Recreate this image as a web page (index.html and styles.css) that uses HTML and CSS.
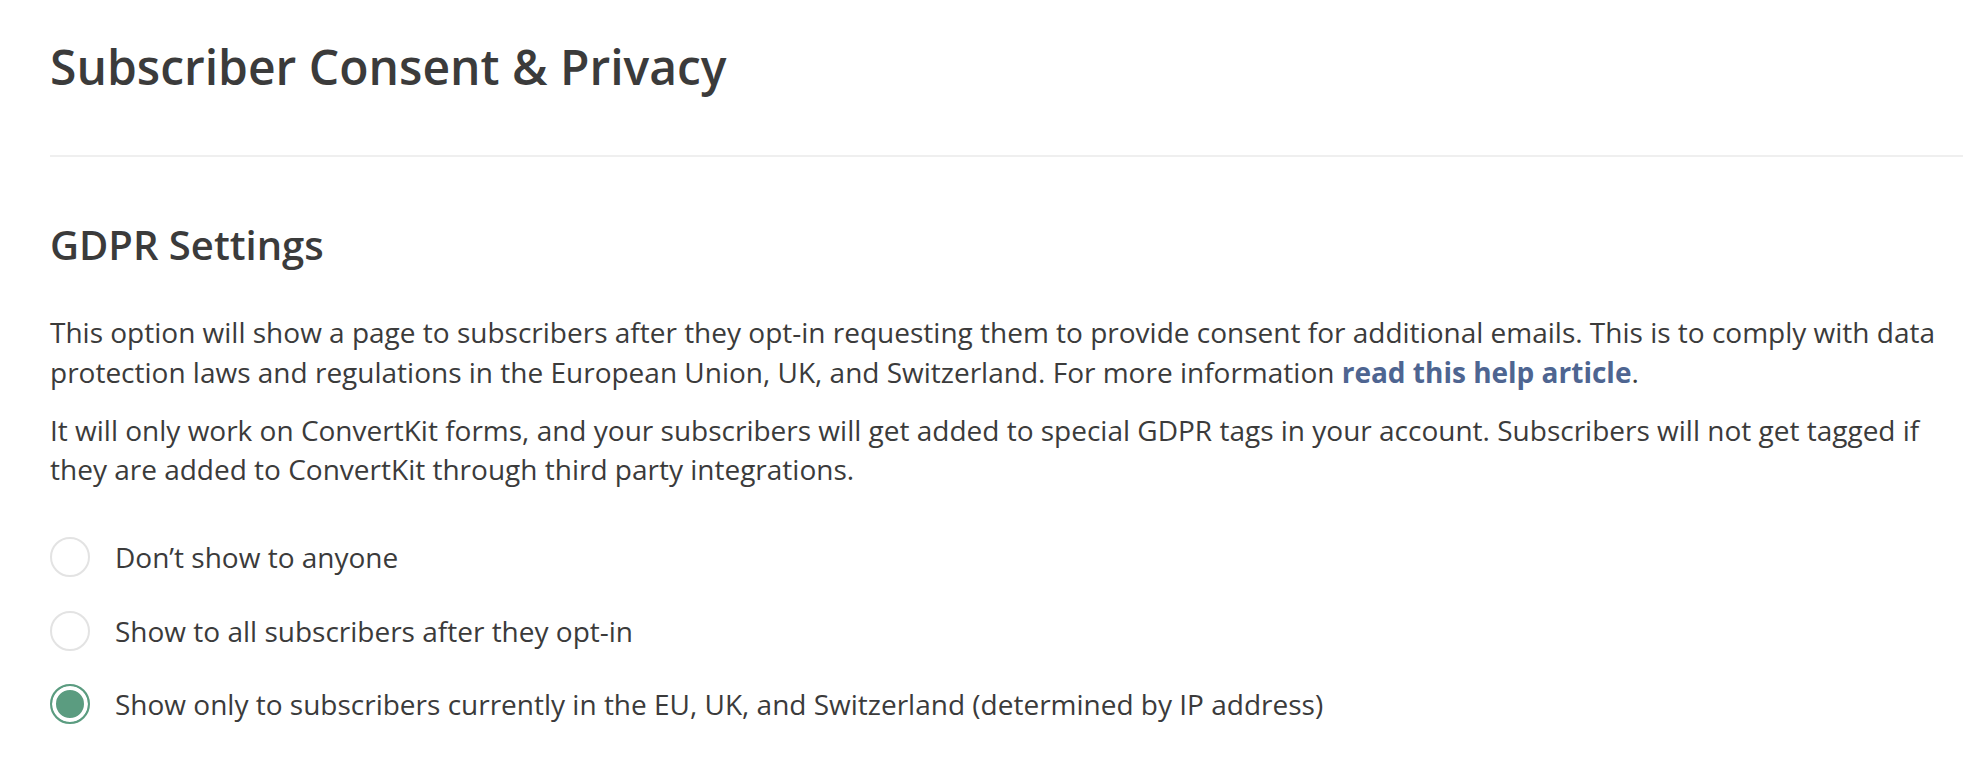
FILE: index.html
```html
<!DOCTYPE html>
<html lang="en">
<head>
<meta charset="utf-8">
<title>Subscriber Consent &amp; Privacy</title>
<link rel="stylesheet" href="styles.css">
</head>
<body>
<main class="page">
  <header class="page-header">
    <h1 class="page-title">Subscriber Consent &amp; Privacy</h1>
  </header>
  <section class="section">
    <h2 class="section-title">GDPR Settings</h2>
    <p class="text">This option will show a page to subscribers after they opt-in requesting them to provide consent for additional emails. This is to comply with data protection laws and regulations in the European Union, UK, and Switzerland. For more information <a class="link" href="#">read this help article</a>.</p>
    <p class="text">It will only work on ConvertKit forms, and your subscribers will get added to special GDPR tags in your account. Subscribers will not get tagged if they are added to ConvertKit through third party integrations.</p>
    <div class="options">
      <label class="option"><span class="radio"></span><span class="option-label">Don’t show to anyone</span></label>
      <label class="option"><span class="radio"></span><span class="option-label">Show to all subscribers after they opt-in</span></label>
      <label class="option"><span class="radio radio-checked"></span><span class="option-label">Show only to subscribers currently in the EU, UK, and Switzerland (determined by IP address)</span></label>
    </div>
  </section>
</main>
</body>
</html>
```
FILE: styles.css
```css
html, body {
  margin: 0;
  padding: 0;
  background: #ffffff;
}
body {
  font-family: "Open Sans", "Liberation Sans", sans-serif;
  color: #3b3b3b;
}
.page {
  padding: 39px 23px 0 50px;
}
.page-header {
  padding-bottom: 60px;
  border-bottom: 2px solid #efefef;
}
.page-title {
  margin: 0;
  font-size: 48px;
  line-height: 56px;
  font-weight: 600;
  color: #3b3b3b;
}
.section {
  padding-top: 64px;
}
.section-title {
  margin: 0 0 44px;
  font-size: 40px;
  line-height: 48px;
  font-weight: 600;
  color: #3b3b3b;
}
.text {
  margin: 0 0 18.5px;
  font-size: 28px;
  line-height: 39.5px;
}
.link {
  color: #4e6591;
  font-weight: 700;
  text-decoration: none;
}
.options {
  margin-top: 47.5px;
  display: flex;
  flex-direction: column;
  gap: 33.5px;
}
.option {
  display: flex;
  align-items: center;
  gap: 25px;
  height: 40px;
}
.radio {
  box-sizing: border-box;
  width: 40px;
  height: 40px;
  border-radius: 50%;
  border: 2px solid #e3e3e3;
  background: #fff;
  flex: none;
}
.radio-checked {
  border-color: #5b9c80;
  background: #5b9c80;
  box-shadow: inset 0 0 0 4px #fff;
}
.option-label {
  font-size: 28px;
  line-height: 40px;
}
```
